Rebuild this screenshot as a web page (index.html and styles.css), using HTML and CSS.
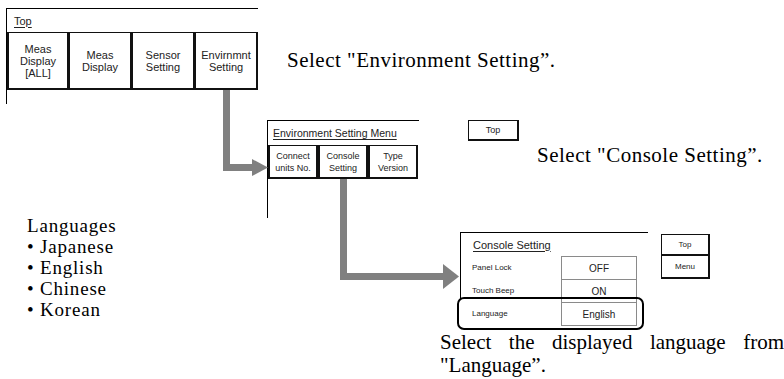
FILE: index.html
```html
<!DOCTYPE html>
<html lang="en">
<head>
  <meta charset="UTF-8">
  <title>Language Setting</title>
  <meta name="viewport" content="width=device-width, initial-scale=1.0">
  <link rel="stylesheet" href="styles.css">
</head>
<body>

  <div class="canvas">

    <!-- Top screen -->
    <div class="screen main">
      <div class="screen-title"><span class="u">Top</span></div>
      <div class="key-row">
        <div class="key k1">Meas<br>Display<br>[ALL]</div>
        <div class="key">Meas<br>Display</div>
        <div class="key">Sensor<br>Setting</div>
        <div class="key">Envirnmnt<br>Setting</div>
      </div>
    </div>
    <p class="note note-env">Select "Environment Setting”.</p>

    <!-- Environment Setting Menu screen -->
    <div class="screen env">
      <div class="screen-title"><span class="u">Environment Setting Menu</span></div>
      <div class="key-row">
        <div class="key">Connect<br>units No.</div>
        <div class="key">Console<br>Setting</div>
        <div class="key">Type<br>Version</div>
      </div>
    </div>
    <div class="side-key env-top">Top</div>
    <p class="note note-console">Select "Console Setting”.</p>

    <ul class="languages">
      <li class="head">Languages</li>
      <li>• Japanese</li>
      <li>• English</li>
      <li>• Chinese</li>
      <li>• Korean</li>
    </ul>

    <!-- Console Setting screen -->
    <div class="screen console">
      <div class="screen-title"><span class="u">Console Setting</span></div>
      <div class="setting-row"><span class="label">Panel Lock</span><span class="value">OFF</span></div>
      <div class="setting-row"><span class="label">Touch Beep</span><span class="value">ON</span></div>
      <div class="setting-row"><span class="label">Language</span><span class="value last">English</span></div>
    </div>
    <div class="side-keys">
      <div class="side-key">Top</div>
      <div class="side-key">Menu</div>
    </div>
    <div class="highlight"></div>
    <p class="note note-lang">Select the displayed language from "Language”.</p>

    <svg class="arrows" width="784" height="379" viewBox="0 0 784 379">
      <g fill="#808080">
        <rect x="223" y="90" width="7" height="81"/>
        <rect x="223" y="164" width="31" height="7"/>
        <polygon points="252,159 268,167.5 252,176"/>
        <rect x="340" y="179" width="7" height="101"/>
        <rect x="340" y="273" width="105" height="7"/>
        <polygon points="443,264 459,276.5 443,289"/>
      </g>
    </svg>

  </div>

</body>
</html>
```

FILE: styles.css
```css
body {
  margin: 0;
  background: #fff;
  color: #000;
  font-family: "Liberation Serif", "Times New Roman", serif;
}

.canvas {
  position: relative;
  width: 784px;
  height: 379px;
  overflow: hidden;
}

/* screens drawn on the diagram */
.screen {
  position: absolute;
  box-sizing: border-box;
  border-top: 1px solid #000;
  border-left: 1px solid #000;
  font-family: "Liberation Sans", Arial, sans-serif;
  color: #222;
}

.u {
  text-decoration: underline;
  text-underline-offset: 2px;
}

.screen-title {
  display: flex;
  align-items: center;
}

.key-row {
  display: flex;
}

.key {
  box-sizing: border-box;
  display: flex;
  align-items: center;
  justify-content: center;
  text-align: center;
  border: 1px solid #111;
  border-right-width: 2px;
  border-bottom-width: 2px;
}

.main {
  left: 6px;
  top: 8px;
  width: 252px;
  height: 96px;
  font-size: 11px;
}

.main .screen-title {
  height: 23px;
  padding-left: 7px;
}

.main .key {
  width: 63px;
  height: 58px;
  line-height: 12px;
}

.main .key.k1 {
  width: 62px;
  border-left-width: 2px;
}

.env {
  left: 267px;
  top: 120px;
  width: 152px;
  height: 98px;
  font-size: 10.5px;
}

.env .screen-title {
  height: 24px;
  padding-left: 5px;
}

.env .key {
  width: 50px;
  height: 34px;
  font-size: 9px;
  line-height: 12px;
  border-left-width: 2px;
}

.side-key {
  box-sizing: border-box;
  display: flex;
  align-items: center;
  justify-content: center;
  border: 1px solid #111;
  border-right-width: 2px;
  border-bottom-width: 2px;
  font-family: "Liberation Sans", Arial, sans-serif;
  font-size: 9px;
  color: #222;
  background: #fff;
}

.env-top {
  position: absolute;
  left: 468px;
  top: 120px;
  width: 51px;
  height: 21px;
}

.console {
  left: 460px;
  top: 232px;
  width: 188px;
  border-left: none;
  font-size: 11px;
}

.console::before {
  content: "";
  position: absolute;
  left: 0;
  top: 0;
  width: 1px;
  height: 66px;
  background: #000;
}

.console .screen-title {
  height: 23px;
  padding-left: 13px;
}

.setting-row {
  display: flex;
  height: 23px;
}

.label {
  width: 101px;
  padding-left: 12px;
  box-sizing: border-box;
  display: flex;
  align-items: center;
  font-size: 8px;
}

.value {
  width: 76px;
  box-sizing: border-box;
  display: flex;
  align-items: center;
  justify-content: center;
  border: 1px solid #8a8a8a;
  border-bottom: none;
  font-size: 10px;
}

.value.last {
  border-bottom: 1px solid #8a8a8a;
  height: 24px;
}

.side-keys {
  position: absolute;
  left: 661px;
  top: 234px;
  width: 49px;
  display: flex;
  flex-direction: column;
}

.side-keys .side-key {
  height: 22px;
  font-size: 8px;
}

.side-keys .side-key + .side-key {
  height: 23px;
  border-top: none;
}

.highlight {
  position: absolute;
  left: 457px;
  top: 297px;
  width: 187px;
  height: 33px;
  box-sizing: border-box;
  border: 2px solid #000;
  border-radius: 7px;
}

/* captions */
.note {
  position: absolute;
  margin: 0;
  font-size: 21px;
  line-height: 24px;
  letter-spacing: 0.5px;
}

.note-env {
  left: 287px;
  top: 48px;
}

.note-console {
  left: 537px;
  top: 143px;
}

.note-lang {
  left: 440px;
  top: 331px;
  width: 344px;
  line-height: 23px;
  letter-spacing: 0;
  text-align: justify;
}

.languages {
  position: absolute;
  left: 27px;
  top: 215px;
  margin: 0;
  padding: 0;
  list-style: none;
  font-size: 19px;
  line-height: 21px;
  letter-spacing: 0.8px;
}

.arrows {
  position: absolute;
  left: 0;
  top: 0;
  pointer-events: none;
}
```
